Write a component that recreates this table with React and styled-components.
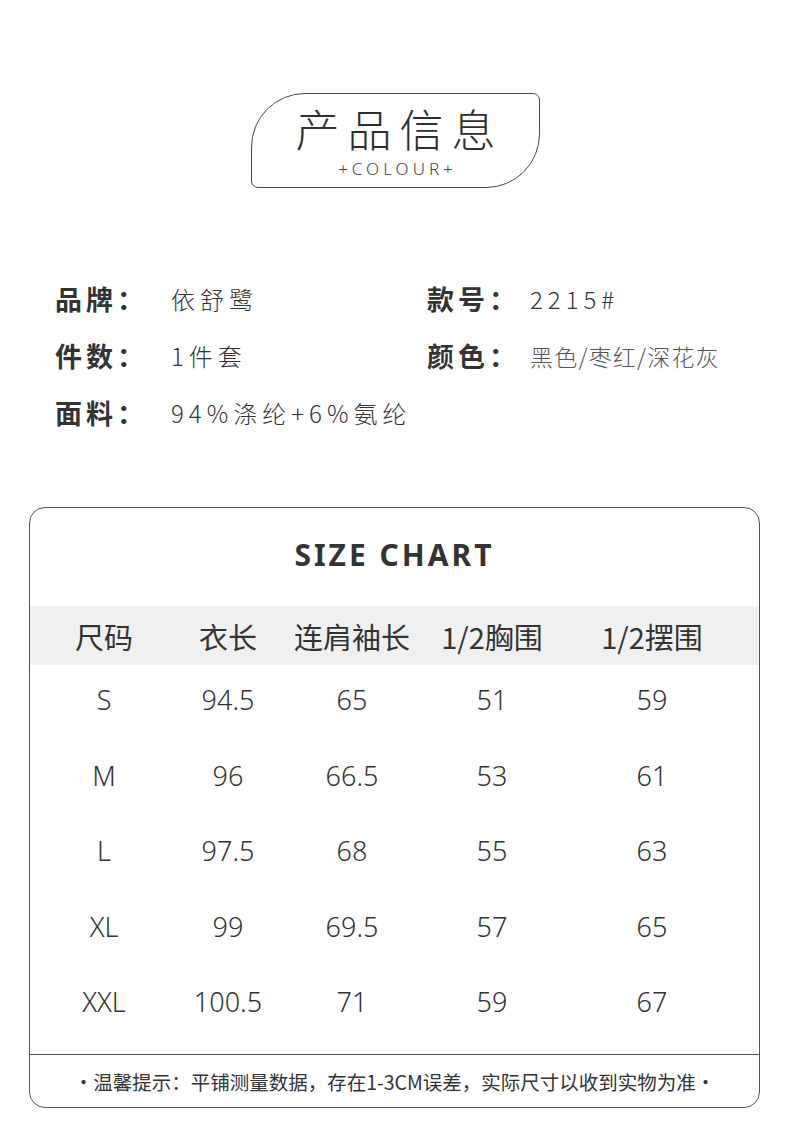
import React from "react";
import styled, { createGlobalStyle } from "styled-components";

const GlobalStyle = createGlobalStyle`
  html, body {
    margin: 0;
    padding: 0;
    background: #fff;
  }
  body {
    font-family: "Noto Sans CJK SC", "Noto Sans", sans-serif;
    color: #333;
  }
`;

const info = [
  [
    { label: "品牌", value: "依舒鹭" },
    { label: "款号", value: "2215#" },
  ],
  [
    { label: "件数", value: "1件套" },
    { label: "颜色", value: "黑色/枣红/深花灰", muted: true },
  ],
  [{ label: "面料", value: "94%涤纶+6%氨纶" }],
];

const columns = ["尺码", "衣长", "连肩袖长", "1/2胸围", "1/2摆围"];

const rows = [
  ["S", "94.5", "65", "51", "59"],
  ["M", "96", "66.5", "53", "61"],
  ["L", "97.5", "68", "55", "63"],
  ["XL", "99", "69.5", "57", "65"],
  ["XXL", "100.5", "71", "59", "67"],
];

const App = () => {
  return (
    <React.Fragment>
      <GlobalStyle />
      <Page>
        <TitleWrap>
          <TitleBadge>
            <TitleText>产品信息</TitleText>
            <SubTitle>+COLOUR+</SubTitle>
          </TitleBadge>
        </TitleWrap>

        <InfoGrid>
          {info.map((row, i) => (
            <InfoRow key={i}>
              {row.map((item, j) => (
                <InfoItem key={item.label}>
                  <Label $w={j === 0 ? 116 : 103}>{item.label}：</Label>
                  <Value $muted={item.muted}>{item.value}</Value>
                </InfoItem>
              ))}
            </InfoRow>
          ))}
        </InfoGrid>

        <ChartBox>
          <ChartTitle>SIZE CHART</ChartTitle>
          <HeadRow>
            {columns.map((c) => (
              <HeadCell key={c}>{c}</HeadCell>
            ))}
          </HeadRow>
          <Body>
            {rows.map((r) => (
              <DataRow key={r[0]}>
                {r.map((v, i) => (
                  <DataCell key={i}>{v}</DataCell>
                ))}
              </DataRow>
            ))}
          </Body>
          <Footer>·温馨提示：平铺测量数据，存在1-3CM误差，实际尺寸以收到实物为准·</Footer>
        </ChartBox>
      </Page>
    </React.Fragment>
  );
};

const Page = styled.div`
  width: 790px;
  height: 1132px;
  padding-top: 93px;
  box-sizing: border-box;
`;

const TitleWrap = styled.div`
  display: flex;
  justify-content: center;
  padding-left: 1px;
`;

const TitleBadge = styled.div`
  width: 289px;
  height: 95px;
  box-sizing: border-box;
  border: 1.5px solid #4a4a4a;
  border-radius: 54px 7px 54px 7px;
  display: flex;
  flex-direction: column;
  align-items: center;
  padding-top: 10px;
`;

const TitleText = styled.div`
  font-size: 44px;
  font-weight: 300;
  letter-spacing: 8px;
  line-height: 48px;
  color: #2e2e2e;
  padding-left: 8px;
`;

const SubTitle = styled.div`
  font-family: "Noto Sans", "Open Sans", sans-serif;
  font-size: 17px;
  font-weight: 300;
  letter-spacing: 4px;
  line-height: 22px;
  color: #444;
  margin-top: 6px;
  padding-left: 4px;
`;

const InfoGrid = styled.div`
  margin-top: 91px;
  padding-left: 55px;
  display: flex;
  flex-direction: column;
  gap: 19px;
`;

const InfoRow = styled.div`
  display: grid;
  grid-template-columns: 372px 1fr;
  height: 38px;
  align-items: center;
`;

const InfoItem = styled.div`
  display: flex;
  align-items: center;
`;

const Label = styled.span`
  font-size: 27px;
  font-weight: 700;
  color: #333;
  letter-spacing: 4px;
  width: ${(p) => p.$w}px;
  flex-shrink: 0;
  white-space: nowrap;
`;

const Value = styled.span`
  font-size: ${(p) => (p.$muted ? "23px" : "24px")};
  font-weight: 300;
  color: ${(p) => (p.$muted ? "#555" : "#333")};
  letter-spacing: ${(p) => (p.$muted ? "1.2px" : "5px")};
`;

const ChartBox = styled.div`
  margin: 76px 30px 0 29px;
  height: 601px;
  box-sizing: border-box;
  border: 1px solid #555;
  border-radius: 16px;
  display: flex;
  flex-direction: column;
`;

const ChartTitle = styled.div`
  font-family: "Noto Sans", "Open Sans", sans-serif;
  font-size: 30px;
  font-weight: 700;
  letter-spacing: 3px;
  color: #333;
  text-align: center;
  line-height: 40px;
  margin-top: 27px;
  height: 71px;
`;

const gridCols = "148px 100px 148px 132px 188px";

const HeadRow = styled.div`
  display: grid;
  grid-template-columns: ${gridCols};
  background: #f0f0f0;
  height: 59px;
  align-items: center;
`;

const HeadCell = styled.div`
  font-size: 29px;
  font-weight: 400;
  color: #333;
  text-align: center;
  white-space: nowrap;
`;

const Body = styled.div`
  display: flex;
  flex-direction: column;
  flex: 1;
`;

const DataRow = styled.div`
  display: grid;
  grid-template-columns: ${gridCols};
  height: 75.5px;
  align-items: center;
`;

const DataCell = styled.div`
  font-family: "Noto Sans", "Open Sans", sans-serif;
  font-size: 27px;
  font-weight: 300;
  color: #333;
  text-align: center;
  padding-bottom: 6px;
`;

const Footer = styled.div`
  border-top: 1px solid #555;
  height: 52px;
  display: flex;
  align-items: center;
  justify-content: center;
  font-size: 19.5px;
  font-weight: 400;
  color: #333;
`;

export default App;
